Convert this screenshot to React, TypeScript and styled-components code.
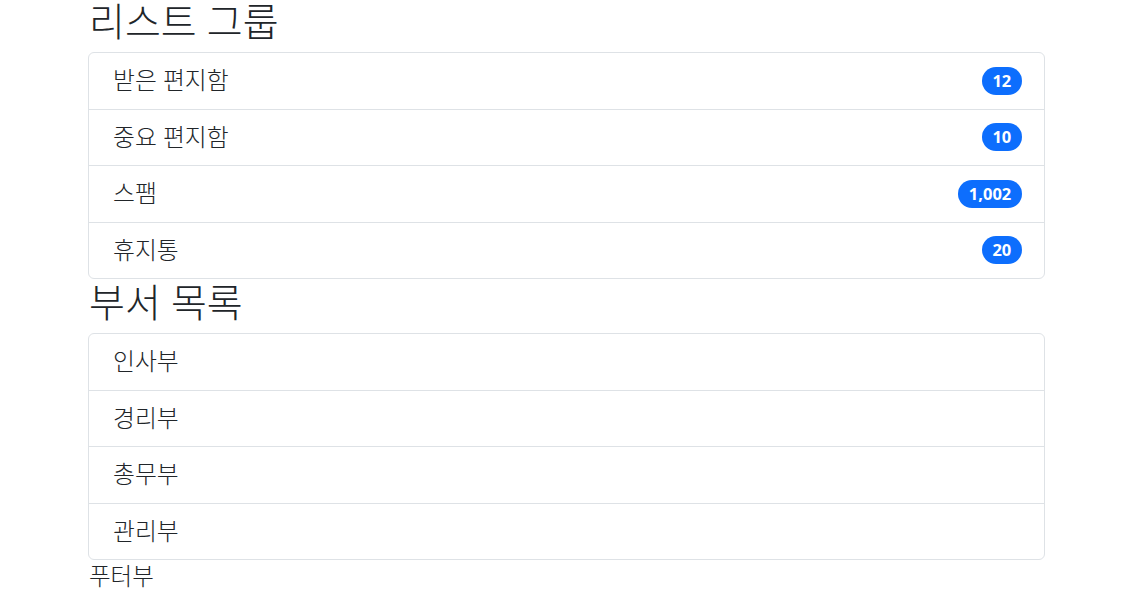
import React from 'react';
import styled, { createGlobalStyle } from 'styled-components';

const GlobalStyle = createGlobalStyle`
  * {
    box-sizing: border-box;
  }
  body {
    margin: 0;
    background: #fff;
    color: #212529;
    font-family: "Noto Sans", "Noto Sans CJK KR", sans-serif;
  }
`;

const Page = styled.div`
  margin-top: -2px;
  padding: 0 94px 0 88px;
`;

const Heading = styled.h1`
  margin: 0 0 8px;
  padding-left: 1px;
  font-size: 39px;
  line-height: 46px;
  font-weight: 300;
  color: #212529;
`;

const ListGroup = styled.ul`
  margin: 0;
  padding: 0;
  list-style: none;
  border: 1px solid #dee2e6;
  border-radius: 6px;
`;

const ListItem = styled.li`
  display: flex;
  justify-content: space-between;
  align-items: center;
  padding: 11.25px 22px 11.25px 24px;
  font-size: 23.8px;
  font-weight: 300;
  line-height: 33px;
  border-bottom: 1px solid #dee2e6;

  &:last-child {
    border-bottom: none;
  }
`;

const Badge = styled.span`
  display: inline-block;
  padding: 5.8px 10.7px;
  font-size: 16.5px;
  font-weight: 700;
  line-height: 1;
  color: #fff;
  background: #0d6efd;
  border-radius: 50rem;
`;

const Footer = styled.div`
  padding-left: 1px;
  font-size: 23.5px;
  font-weight: 300;
  line-height: 33px;
`;

const mailboxes = [
  { name: '받은 편지함', count: '12' },
  { name: '중요 편지함', count: '10' },
  { name: '스팸', count: '1,002' },
  { name: '휴지통', count: '20' },
];

const departments = ['인사부', '경리부', '총무부', '관리부'];

export default function App() {
  return (
    <>
      <GlobalStyle />
      <Page>
        <Heading>리스트 그룹</Heading>
        <ListGroup>
          {mailboxes.map(m => (
            <ListItem key={m.name}>
              <span>{m.name}</span>
              <Badge>{m.count}</Badge>
            </ListItem>
          ))}
        </ListGroup>
        <Heading>부서 목록</Heading>
        <ListGroup>
          {departments.map(d => (
            <ListItem key={d}>{d}</ListItem>
          ))}
        </ListGroup>
        <Footer>푸터부</Footer>
      </Page>
    </>
  );
}
